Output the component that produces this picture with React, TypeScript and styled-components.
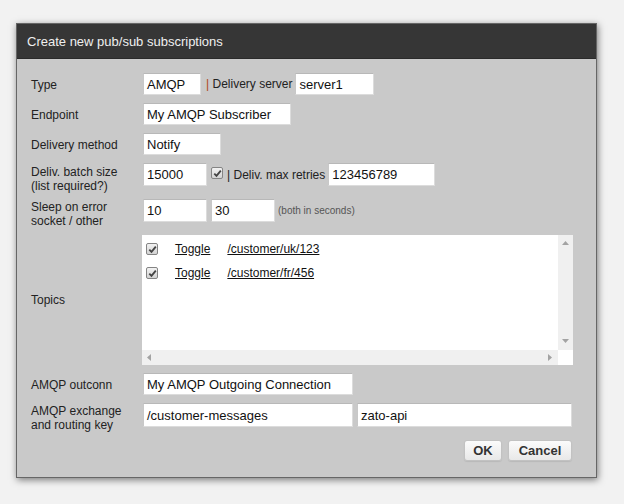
import React from "react";
import styled, { createGlobalStyle } from "styled-components";

const Global = createGlobalStyle`
  html, body { margin: 0; padding: 0; background: #f2f2f2; }
  body { font-family: "Liberation Sans", Arial, sans-serif; }
  * { box-sizing: border-box; }
`;

const Page = styled.div`
  width: 624px;
  height: 504px;
  padding: 23px 0 0 16px;
`;

const Dialog = styled.div`
  width: 581px;
  border: 1px solid #666;
  box-shadow: 1px 2px 7px rgba(0, 0, 0, 0.5);
  background: #c9c9c9;
`;

const Header = styled.div`
  height: 35px;
  background: #363636;
  color: #efefef;
  font-size: 13px;
  display: flex;
  align-items: center;
  padding-left: 10px;
  border-bottom: 1px solid #2a2a2a;
`;

const Body = styled.div`
  padding: 14px 24px 16px 14px;
  display: flex;
  flex-direction: column;
  gap: 8px;
`;

const Row = styled.div<{ $align?: string }>`
  display: grid;
  grid-template-columns: 112px 1fr;
  align-items: ${(p) => p.$align || "center"};
`;

const Label = styled.div<{ $pt?: number; $mb?: number }>`
  font-size: 12px;
  line-height: 14px;
  color: #222;
  padding-top: ${(p) => p.$pt || 0}px;
  margin-bottom: ${(p) => p.$mb || 0}px;
`;

const Fields = styled.div`
  display: flex;
  align-items: center;
`;

const Input = styled.div<{ $w: number; $h?: number; $ml?: number }>`
  width: ${(p) => p.$w}px;
  height: ${(p) => p.$h || 22}px;
  margin-left: ${(p) => p.$ml || 0}px;
  background: #fff;
  border: 1px solid #dcdcdc;
  border-top-color: #b8b8b8;
  border-left-color: #c8c8c8;
  padding: 0 3px;
  display: flex;
  align-items: center;
  font-size: 13px;
  color: #111;
  white-space: nowrap;
  overflow: hidden;
`;

const Inline = styled.span<{ $ml?: number; $mr?: number }>`
  font-size: 12px;
  color: #222;
  margin-left: ${(p) => p.$ml || 0}px;
  margin-right: ${(p) => p.$mr || 0}px;
  white-space: nowrap;
`;

const Pipe = styled.span<{ $color?: string }>`
  color: ${(p) => p.$color || "#222"};
`;

const Note = styled.span`
  font-size: 10px;
  color: #555;
  margin-left: 3px;
`;

const CheckBox = styled.span<{ $ml?: number; $mt?: number }>`
  display: inline-flex;
  align-items: center;
  justify-content: center;
  width: 12px;
  height: 12px;
  margin-left: ${(p) => p.$ml || 0}px;
  margin-top: ${(p) => p.$mt || 0}px;
  border: 1px solid #848484;
  border-radius: 2px;
  background: linear-gradient(#f2f2f2, #d3d3d3);
  flex: none;
`;

const CheckMark = () => (
  <svg width="9" height="9" viewBox="0 0 9 9">
    <path d="M1.3 4.6 L3.5 6.9 L7.8 1.6" fill="none" stroke="#444" strokeWidth="1.8" />
  </svg>
);

const TopicsBox = styled.div`
  width: 431px;
  height: 130px;
  margin-left: -1px;
  display: grid;
  grid-template-columns: 1fr 15px;
  grid-template-rows: 1fr 15px;
  background: #fff;
`;

const TopicList = styled.div`
  padding: 8px 0 0 4px;
  display: flex;
  flex-direction: column;
  gap: 12px;
`;

const TopicRow = styled.div`
  display: flex;
  align-items: center;
  height: 12px;
  font-size: 12px;
`;

const Link = styled.a<{ $ml: number }>`
  color: #111;
  text-decoration: underline;
  margin-left: ${(p) => p.$ml}px;
  cursor: pointer;
`;

const VBar = styled.div`
  background: #f0f0f0;
  display: flex;
  flex-direction: column;
  justify-content: space-between;
  align-items: center;
  padding: 6px 0 7px;
`;

const HBar = styled.div`
  background: #f0f0f0;
  display: flex;
  justify-content: space-between;
  align-items: center;
  padding: 0 6px 0 5px;
`;

const Corner = styled.div`
  background: #fff;
`;

const Arrow = ({ dir }: { dir: "up" | "down" | "left" | "right" }) => {
  const pts = {
    up: "0,4 7,4 3.5,0",
    down: "0,0 7,0 3.5,4",
    left: "4,0 4,7 0,3.5",
    right: "0,0 0,7 4,3.5",
  }[dir];
  const vertical = dir === "up" || dir === "down";
  return (
    <svg width={vertical ? 7 : 4} height={vertical ? 4 : 7} viewBox={vertical ? "0 0 7 4" : "0 0 4 7"}>
      <polygon points={pts} fill="#a3a3a3" />
    </svg>
  );
};

const Buttons = styled.div`
  display: flex;
  justify-content: flex-end;
  gap: 6px;
  margin-top: 1px;
`;

const Button = styled.button<{ $w: number }>`
  width: ${(p) => p.$w}px;
  height: 21px;
  padding: 0;
  font-family: "Liberation Sans", Arial, sans-serif;
  font-size: 13px;
  font-weight: bold;
  color: #333;
  background: linear-gradient(#fbfbfb, #e8e8e8);
  border: 1px solid #c2c2c2;
  border-radius: 3px;
  box-shadow: 0 1px 1px rgba(0, 0, 0, 0.08);
`;

export default function App() {
  return (
    <Page>
      <Global />
      <Dialog>
        <Header>Create new pub/sub subscriptions</Header>
        <Body>
          <Row>
            <Label $pt={2}>Type</Label>
            <Fields>
              <Input $w={58}>AMQP</Input>
              <Inline $ml={5} $mr={3}>
                <Pipe $color="#b0451a">|</Pipe> Delivery server
              </Inline>
              <Input $w={79}>server1</Input>
            </Fields>
          </Row>
          <Row>
            <Label $pt={2}>Endpoint</Label>
            <Fields>
              <Input $w={148}>My AMQP Subscriber</Input>
            </Fields>
          </Row>
          <Row>
            <Label $pt={2}>Delivery method</Label>
            <Fields>
              <Input $w={78}>Notify</Input>
            </Fields>
          </Row>
          <Row $align="start">
            <Label $pt={2} $mb={-2}>
              Deliv. batch size
              <br />
              (list required?)
            </Label>
            <Fields>
              <Input $w={64} $h={23}>15000</Input>
              <CheckBox $ml={4} $mt={-3}>
                <CheckMark />
              </CheckBox>
              <Inline $ml={4} $mr={3}>
                <Pipe>|</Pipe> Deliv. max retries
              </Inline>
              <Input $w={107} $h={23}>123456789</Input>
            </Fields>
          </Row>
          <Row $align="start">
            <Label $pt={1} $mb={-1}>
              Sleep on error
              <br />
              socket / other
            </Label>
            <Fields>
              <Input $w={64} $h={23}>10</Input>
              <Input $w={64} $h={23} $ml={4}>30</Input>
              <Note>(both in seconds)</Note>
            </Fields>
          </Row>
          <Row>
            <Label>Topics</Label>
            <TopicsBox>
              <TopicList>
                <TopicRow>
                  <CheckBox>
                    <CheckMark />
                  </CheckBox>
                  <Link $ml={17}>Toggle</Link>
                  <Link $ml={17}>/customer/uk/123</Link>
                </TopicRow>
                <TopicRow>
                  <CheckBox>
                    <CheckMark />
                  </CheckBox>
                  <Link $ml={17}>Toggle</Link>
                  <Link $ml={17}>/customer/fr/456</Link>
                </TopicRow>
              </TopicList>
              <VBar>
                <Arrow dir="up" />
                <Arrow dir="down" />
              </VBar>
              <HBar>
                <Arrow dir="left" />
                <Arrow dir="right" />
              </HBar>
              <Corner />
            </TopicsBox>
          </Row>
          <Row>
            <Label $pt={2}>AMQP outconn</Label>
            <Fields>
              <Input $w={210}>My AMQP Outgoing Connection</Input>
            </Fields>
          </Row>
          <Row $align="start">
            <Label $pt={1} $mb={-1}>
              AMQP exchange
              <br />
              and routing key
            </Label>
            <Fields>
              <Input $w={210} $h={24}>/customer-messages</Input>
              <Input $w={215} $h={24} $ml={4}>zato-api</Input>
            </Fields>
          </Row>
          <Buttons>
            <Button $w={38}>OK</Button>
            <Button $w={64}>Cancel</Button>
          </Buttons>
        </Body>
      </Dialog>
    </Page>
  );
}
